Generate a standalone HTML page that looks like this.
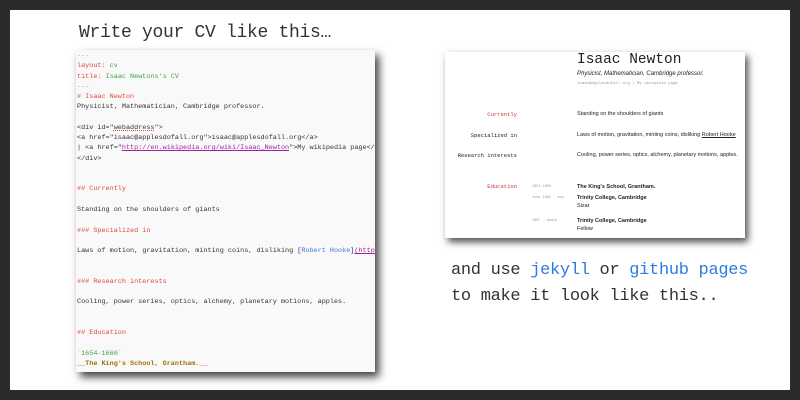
<!DOCTYPE html>
<html><head><style>
body{margin:0;width:800px;height:400px;background:#2b2b2b;overflow:hidden;position:relative;font-family:"Liberation Mono",monospace}
.w{position:absolute;left:10px;top:10px;width:780px;height:380px;background:#fff}
.h{position:absolute;left:79px;top:23px;font-size:18px;color:#333;white-space:nowrap;letter-spacing:-0.3px}
.ed{position:absolute;left:76px;top:50px;width:299px;height:322px;background:#f9f9f9;box-shadow:4px 5px 8px rgba(0,0,0,.75);overflow:hidden;font-size:6.8px;line-height:10.27px;color:#333;padding-top:1px;box-sizing:border-box}
.ed div{white-space:pre;height:10.27px;padding-left:1px}
.r{color:#e0483c}.g{color:#3da33d}.gr{color:#aaa}.b{color:#3b73e0}.p{color:#a020a0;text-decoration:underline}.o{color:#a07000;font-weight:bold}
.cv{position:absolute;left:445px;top:52px;width:300px;height:186px;background:#fff;box-shadow:3px 4px 7px rgba(0,0,0,.7);font-family:"Liberation Sans",sans-serif;color:#222}
.cv .t{position:absolute;white-space:nowrap}
.lab{font-family:"Liberation Mono",monospace;font-size:5.5px;text-align:right;width:70px}
.s{font-size:5.5px}
.d{font-family:"Liberation Mono",monospace;font-size:3.5px;color:#999}
.txt{position:absolute;left:451px;top:258px;font-size:17px;line-height:26px;color:#333;white-space:nowrap;letter-spacing:-0.3px}
.txt span{color:#2e7be0}
</style></head><body>
<div class="w"></div>
<div class="h">Write your CV like this…</div>
<div class="ed">
<div class="gr">---</div>
<div><span class="r">layout:</span> <span class="g">cv</span></div>
<div><span class="r">title:</span> <span class="g">Isaac Newtons's CV</span></div>
<div class="gr">---</div>
<div class="r"># Isaac Newton</div>
<div>Physicist, Mathematician, Cambridge professor.</div>
<div></div>
<div>&lt;div id="<span style="text-decoration:underline dotted #e0483c">webaddress</span>"&gt;</div>
<div>&lt;a href="isaac@applesdofall.org"&gt;isaac@applesdofall.org&lt;/a&gt;</div>
<div>| &lt;a href="<span class="p">http://en.wikipedia.org/wiki/Isaac_Newton</span>"&gt;My wikipedia page&lt;/a&gt;</div>
<div>&lt;/div&gt;</div>
<div></div><div></div>
<div class="r">## Currently</div>
<div></div>
<div>Standing on the shoulders of giants</div>
<div></div>
<div class="r">### Specialized in</div>
<div></div>
<div>Laws of motion, gravitation, minting coins, disliking [<span class="b">Robert Hooke</span>]<span class="p">(http://</span></div>
<div></div><div></div>
<div class="r">### Research interests</div>
<div></div>
<div>Cooling, power series, optics, alchemy, planetary motions, apples.</div>
<div></div><div></div>
<div class="r">## Education</div>
<div></div>
<div class="g">`1654-1660`</div>
<div class="o">__The King's School, Grantham.__</div>
</div>
<div class="cv">
<div class="t" style="left:132px;top:0px;font-family:'Liberation Mono',monospace;font-size:14.5px">Isaac Newton</div>
<div class="t" style="left:132px;top:19px;font-size:6px;font-style:italic">Physicist, Mathematician, Cambridge professor.</div>
<div class="t d" style="left:132px;top:30px;font-size:4px">isaac@applesdofall.org | My wikipedia page</div>
<div class="t lab" style="left:2px;top:59px;color:#c33">Currently</div>
<div class="t s" style="left:132px;top:59px">Standing on the shoulders of giants</div>
<div class="t lab" style="left:2px;top:80px">Specialized in</div>
<div class="t s" style="left:132px;top:80px">Laws of motion, gravitation, minting coins, disliking <u>Robert Hooke</u></div>
<div class="t lab" style="left:2px;top:100px">Research interests</div>
<div class="t s" style="left:132px;top:100px">Cooling, power series, optics, alchemy, planetary motions, apples.</div>
<div class="t lab" style="left:2px;top:131px;color:#c33">Education</div>
<div class="t d" style="left:87px;top:133px">1654-1660</div>
<div class="t s" style="left:132px;top:132px;font-weight:bold">The King's School, Grantham.</div>
<div class="t d" style="left:87px;top:144px">June 1661 - now</div>
<div class="t s" style="left:132px;top:143px;font-weight:bold">Trinity College, Cambridge</div>
<div class="t s" style="left:132px;top:151px">Sizar</div>
<div class="t d" style="left:87px;top:167px">1667 - death</div>
<div class="t s" style="left:132px;top:166px;font-weight:bold">Trinity College, Cambridge</div>
<div class="t s" style="left:132px;top:174px">Fellow</div>
</div>
<div class="txt">and use <span>jekyll</span> or <span>github pages</span><br>to make it look like this..</div>
</body></html>
